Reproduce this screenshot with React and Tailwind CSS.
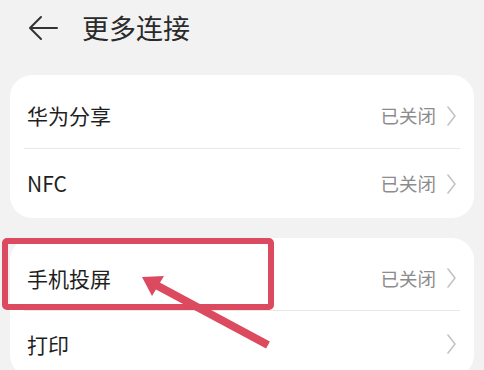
import React from "react";

function Chevron() {
  return (
    <svg width="11" height="22" viewBox="0 0 11 22" className="ml-[10px]">
      <path d="M2 2 L9 11 L2 20" fill="none" stroke="#c4c4c4" strokeWidth="1.6" strokeLinecap="round" strokeLinejoin="round" />
    </svg>
  );
}

function Row({ label, value, h }) {
  return (
    <div className={`flex items-center justify-between pl-[17px] pr-[17px] ${h}`}>
      <span className="text-[21px] text-[#1f1f1f] leading-none">{label}</span>
      <div className="flex items-center">
        {value && <span className="text-[18.5px] text-[#8c8c8c] leading-none">{value}</span>}
        <Chevron />
      </div>
    </div>
  );
}

export default function App() {
  return (
    <div
      className="relative w-[484px] h-[370px] overflow-hidden bg-[#f2f2f2]"
      style={{ fontFamily: '"Noto Sans CJK SC", "Noto Sans", sans-serif' }}
    >
      <div className="flex items-center h-[55px] pl-[28px]">
        <svg width="30" height="26" viewBox="0 0 30 26">
          <path d="M13 2 L2 13 L13 24 M2 13 L29 13" fill="none" stroke="#333" strokeWidth="2" strokeLinecap="round" strokeLinejoin="round" />
        </svg>
        <span className="ml-[24px] text-[27px] text-[#2a2a2a] leading-none">更多连接</span>
      </div>

      <div className="mt-[20px] mx-[10px] rounded-[22px] bg-white pt-[8px]">
        <Row label="华为分享" value="已关闭" h="h-[65px]" />
        <div className="mx-[14px] border-t border-[#e8e8e8]" />
        <Row label="NFC" value="已关闭" h="h-[69px]" />
      </div>

      <div className="mt-[20px] mx-[10px] rounded-[22px] bg-white pt-[8px]">
        <Row label="手机投屏" value="已关闭" h="h-[64px]" />
        <div className="mx-[14px] border-t border-[#e8e8e8]" />
        <Row label="打印" h="h-[66px]" />
      </div>

      <div className="absolute left-[2px] top-[238px] w-[272px] h-[72px] border-[6px] border-[#dc4a5f] rounded-[5px]" />

      <svg className="absolute left-0 top-0" width="484" height="370" viewBox="0 0 484 370">
        <line x1="268" y1="345" x2="156" y2="285" stroke="#dc4a5f" strokeWidth="8" strokeLinecap="butt" />
        <polygon points="142,277 164,276 152,296" fill="#dc4a5f" />
      </svg>
    </div>
  );
}
